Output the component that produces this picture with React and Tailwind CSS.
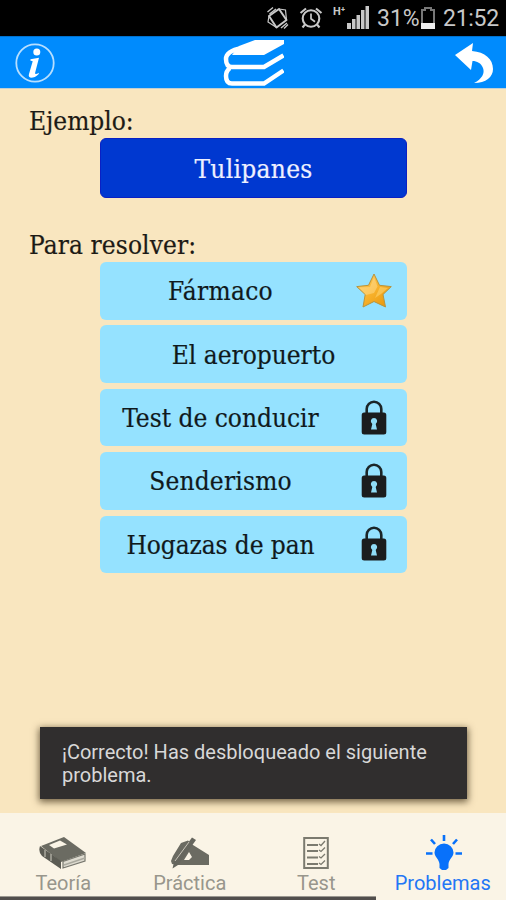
import React, { useState } from "react"

const problems = [
  { name: "Fármaco", state: "solved", tracking: "tracking-[0.3px]" },
  { name: "El aeropuerto", state: "open", tracking: "tracking-normal" },
  { name: "Test de conducir", state: "locked", tracking: "tracking-normal" },
  { name: "Senderismo", state: "locked", tracking: "tracking-[0.2px]" },
  { name: "Hogazas de pan", state: "locked", tracking: "tracking-[-0.1px]" },
]

function StatusBar() {
  return (
    <div className="h-9 bg-black flex items-center justify-end pt-[3px] pr-2 text-[#c8c8c8] text-[23px]">
      {/* Vibrate */}
      <svg className="w-6 h-6 mr-[9px] -mt-1" viewBox="0 0 24 24" fill="none" stroke="currentColor" strokeWidth="2">
        <path d="M3 10 13 3 20.5 14 10.5 21.5Z" strokeLinejoin="round" />
        <path d="M1.5 6 7 1.5M3.500 8 10 3M15 22l6-5M18 22.5l4-4" strokeWidth="1.4" />
        <path d="M3 10 2 16l8.500 5.500M13 3l6.500 1 1 10" strokeWidth="1.2" />
      </svg>
      {/* Alarm */}
      <svg className="w-6 h-6 -mt-1" viewBox="0 0 24 24" fill="none" stroke="currentColor" strokeWidth="2.1">
        <circle cx="12" cy="12.5" r="8.3" />
        <path d="M12 7.5v5.2l4 3" strokeWidth="1.7" />
        <path d="M1.5 7 7 2.5M17 2.5 22.5 7M6 18.5l-2.5 3M18 18.5l2.5 3" />
      </svg>
      <div className="flex ml-[10px] -mt-1">
        <span className="text-[11px] leading-3 font-bold w-[14px]">H⁺</span>
        <svg className="w-[22px] h-6" viewBox="0 0 22 24" fill="currentColor">
          <path d="M0 17h4v6H0zM5 13h3.5v10H5zM9.5 9h3.5v14H9.5zM14 4h3.5v19H14zM18.5 0h3.5v23h-3.5z" />
        </svg>
      </div>
      <span className="ml-[8px] w-[42px] whitespace-nowrap">31%</span>
      <svg className="w-4 h-6 ml-px mr-[7px] -mt-1" viewBox="0 0 16 24">
        <path d="M2 4h3V2h6v2h3v18H2z" fill="none" stroke="#777" strokeWidth="2" />
        <path d="M1 17h14v6H1z" fill="#eee" />
      </svg>
      <span className="w-[55px] tracking-[-0.3px] whitespace-nowrap">21:52</span>
    </div>
  )
}

function Header() {
  return (
    <header className="h-[53px] bg-[#008bfd] border-b border-[#c2cfd2] border-t-[#0071ce] border-t flex items-center justify-between pl-[15px] pr-3">
      <svg className="w-10 h-10 mt-px" viewBox="0 0 40 40">
        <circle cx="20" cy="20" r="18.7" fill="none" stroke="#b7dfff" strokeWidth="1.8" />
        <circle cx="21.8" cy="8.9" r="3.5" fill="#fff" />
        <path d="M15.5 16.2 24 14.7 20.2 29.4Q19.4 32.4 24 29.7L23.5 31.2Q20 34.7 16 34.7 13 34.2 14 31L17.7 18.3 15.3 17.5Z" fill="#fff" />
      </svg>
      <svg className="w-[62px] h-[50px] mr-[3px] mt-[2px]" viewBox="0 0 62 50" fill="none">
        <path d="M33 1H62V5L42 16H10L17 7Z" fill="#fff" />
        <path d="M20 9Q4 12 4 20 4 28 10 28H42L61.5 16.5" stroke="#fff" strokeWidth="4.5" />
        <path d="M8 29Q4 32 4 37 4 44.500 10 44.500H42L61.5 31.500" stroke="#fff" strokeWidth="4.5" />
      </svg>
      <svg className="w-10 h-11 mt-px" viewBox="0 0 40 44">
        <path d="M1 14 19 2 18 10C31 11 39 18 39 28 39 36 32 42 20 42 28 38 31 32 29 27 27 22 23 20 18.5 20L17 29Z" fill="#fff" />
      </svg>
    </header>
  )
}

function Star() {
  return (
    <svg className="w-9 h-9" viewBox="0 0 36 36">
      <defs>
        <linearGradient id="gold" x1="0" y1="0" x2="1" y2="1">
          <stop offset="0" stopColor="#ffd06a" />
          <stop offset=".5" stopColor="#f8b22c" />
          <stop offset="1" stopColor="#e59205" />
        </linearGradient>
      </defs>
      <path d="M18 1 23.5 12.3 35.3 13.6 27 21.5 29.5 34 18 28.5 7 34 9.2 21.5 .7 13.6 12.5 12.3Z" fill="url(#gold)" stroke="#b69440" strokeWidth="1" strokeLinejoin="round" />
      <path d="M18 4 21.5 13.5 18 20 10 22 3 14.5 14 14Z" fill="#ffe29d" opacity=".45" />
      <path d="M24 14 32 15 25 21 19 25Z" fill="#ffdc7c" opacity=".5" />
    </svg>
  )
}

function Lock() {
  return (
    <svg className="w-[26px] h-[35px] mb-px" viewBox="0 0 26 35">
      <path d="M5.7 14V9a7.3 7.3 0 0 1 14.6 0V14" fill="none" stroke="#1b2527" strokeWidth="2.6" />
      <rect x=".7" y="12.5" width="24.6" height="22" rx="2.5" fill="#1b1d1e" />
      <path d="M13 18a3.2 3.2 0 0 1 1.7 5.9L16 29.5h-6l1.3-5.6A3.2 3.2 0 0 1 13 18" fill="#8fdcf6" />
    </svg>
  )
}

function ProblemButton({ problem }) {
  const hasIcon = problem.state !== "open"

  return (
    <button className="w-full h-[57.5px] rounded-md bg-[#95e2ff] text-[#10191c] flex items-center">
      <span className={`flex-1 text-center whitespace-nowrap pt-[2px] ${problem.tracking}`}>{problem.name}</span>
      {hasIcon && (
        <span className="w-[66px] shrink-0 flex justify-center">
          {problem.state === "solved" ? <Star /> : <Lock />}
        </span>
      )}
    </button>
  )
}

function BookIcon() {
  return (
    <svg className="w-12 h-[34px]" viewBox="0 0 48 34">
      <path d="M2 10 25 1 47 17 22 26Z" fill="#6b6b62" />
      <path d="M10 9 21 4.5 28 8.5 15 12.5Z" fill="#faf4e6" />
      <path d="M1 10 22 25V33L3 20Q-1 16 1 10Z" fill="#5c5c54" />
      <path d="M24 25.5 46 18V25L24 32Z" fill="#dedbd0" stroke="#77776e" strokeWidth="1.2" />
      <path d="M25 29 46 22M6 14v7M12 18v7" stroke="#aaa99f" strokeWidth="1.5" />
    </svg>
  )
}

function WritingIcon() {
  return (
    <svg className="w-10 h-[34px]" viewBox="0 0 40 34">
      <path d="M1 25 3 20 11 7 18 4.5 23 9 39 19V29H8L2 28Z" fill="#6b6b62" />
      <path d="M14 24 19 16 22 21 19 24Z" fill="#faf4e6" />
      <path d="M2.5 32.500 4 26 22 1.500 26 4 8 29Z" fill="#66665e" />
      <path d="M5 25 19 6" stroke="#c9c5b9" strokeWidth="1" />
    </svg>
  )
}

function TestIcon() {
  return (
    <svg className="w-[26px] h-[34px]" viewBox="0 0 26 34" fill="none" stroke="#7b7a6f">
      <path d="M1.2 2h23.6v30H1.2z" strokeWidth="2" />
      <path d="M4 9h11M4 15h11M4 21.5h11M4 28h11" strokeWidth="1.8" />
      <path d="m16 8 2 1.5L22 5M16 14l2 1.5 4-4M16 20.5l2 1.5 4-4M16 27l2 1.5 4-4" strokeWidth="1.3" />
    </svg>
  )
}

function BulbIcon() {
  return (
    <svg className="w-9 h-9 ml-0.5" viewBox="0 0 36 36" fill="#0871fa">
      <path d="M18 8.5a9.5 9 0 0 1 9.500 9C27.5 22 23 24 22.5 29V33l-2.500 2h-4l-2.500-2V29C13 24 8.5 22 8.5 17.5a9.5 9 0 0 1 9.500-9" />
      <path d="M18 0v6M5 4.5l4 4.500M31 4.500l-4 4.500M0 18.500h6.500M29.500 18.500h6.500" stroke="#0871fa" strokeWidth="2.6" />
    </svg>
  )
}

const tabs = [
  { name: "Teoría", icon: BookIcon },
  { name: "Práctica", icon: WritingIcon },
  { name: "Test", icon: TestIcon },
  { name: "Problemas", icon: BulbIcon },
]

function App() {
  const [activeTab, setActiveTab] = useState("Problemas")

  return (
    <div className="relative w-[506px] h-[900px] overflow-hidden flex flex-col bg-[#f9e6bf] font-['Roboto',sans-serif]">
      <StatusBar />
      <Header />

      <main className="flex-1 text-[26px] text-[#1d1a15] font-['DejaVu_Serif_Condensed','DejaVu_Serif',serif] [font-stretch:condensed] [-webkit-text-stroke:0.2px]">
        <h2 className="h-[49px] pt-[17px] pl-[29px] leading-[30px]">
          <span>Ejemplo:</span>
        </h2>
        <button className="block w-[307px] h-[60px] ml-[100px] rounded-md bg-[#0038d0] border border-[#0a20c4] text-[#eef0ff] tracking-[0.3px] pt-[2px]">
          Tulipanes
        </button>
        <h2 className="h-[64px] pt-[32px] pl-[29px] leading-[30px] tracking-[0.1px]">
          <span>Para resolver:</span>
        </h2>
        <div className="w-[307px] ml-[100px] flex flex-col gap-[5.9px]">
          {problems.map((problem) => (
            <ProblemButton key={problem.name} problem={problem} />
          ))}
        </div>
      </main>

      {/* Toast */}
      <div className="absolute left-[40px] top-[727px] w-[427px] h-[72px] bg-[#302e2e] shadow-[0_2px_7px_1px_rgba(70,55,30,0.75)] pl-[22px] pt-[14px] text-[20px] leading-[23px] text-[#d8d8d8]">
        <p className="whitespace-nowrap">¡Correcto! Has desbloqueado el siguiente</p>
        <p>problema.</p>
      </div>

      <nav className="h-[87px] shrink-0 bg-[#faf4e6] flex flex-col">
        <div className="flex-1 grid grid-cols-4">
          {tabs.map(({ name, icon: Icon }) => (
            <button
              key={name}
              onClick={() => setActiveTab(name)}
              className={`flex flex-col items-center pt-[21px] text-[20px] leading-6 ${activeTab === name ? "text-[#2376f5]" : "text-[#98968c]"}`}
            >
              <span className="h-[37px] flex items-center">
                <Icon />
              </span>
              {name}
            </button>
          ))}
        </div>
        <div className="w-[376px] h-[4px] bg-[#514e4c] border-t border-[#9b9890]"></div>
      </nav>
    </div>
  )
}

export default App
